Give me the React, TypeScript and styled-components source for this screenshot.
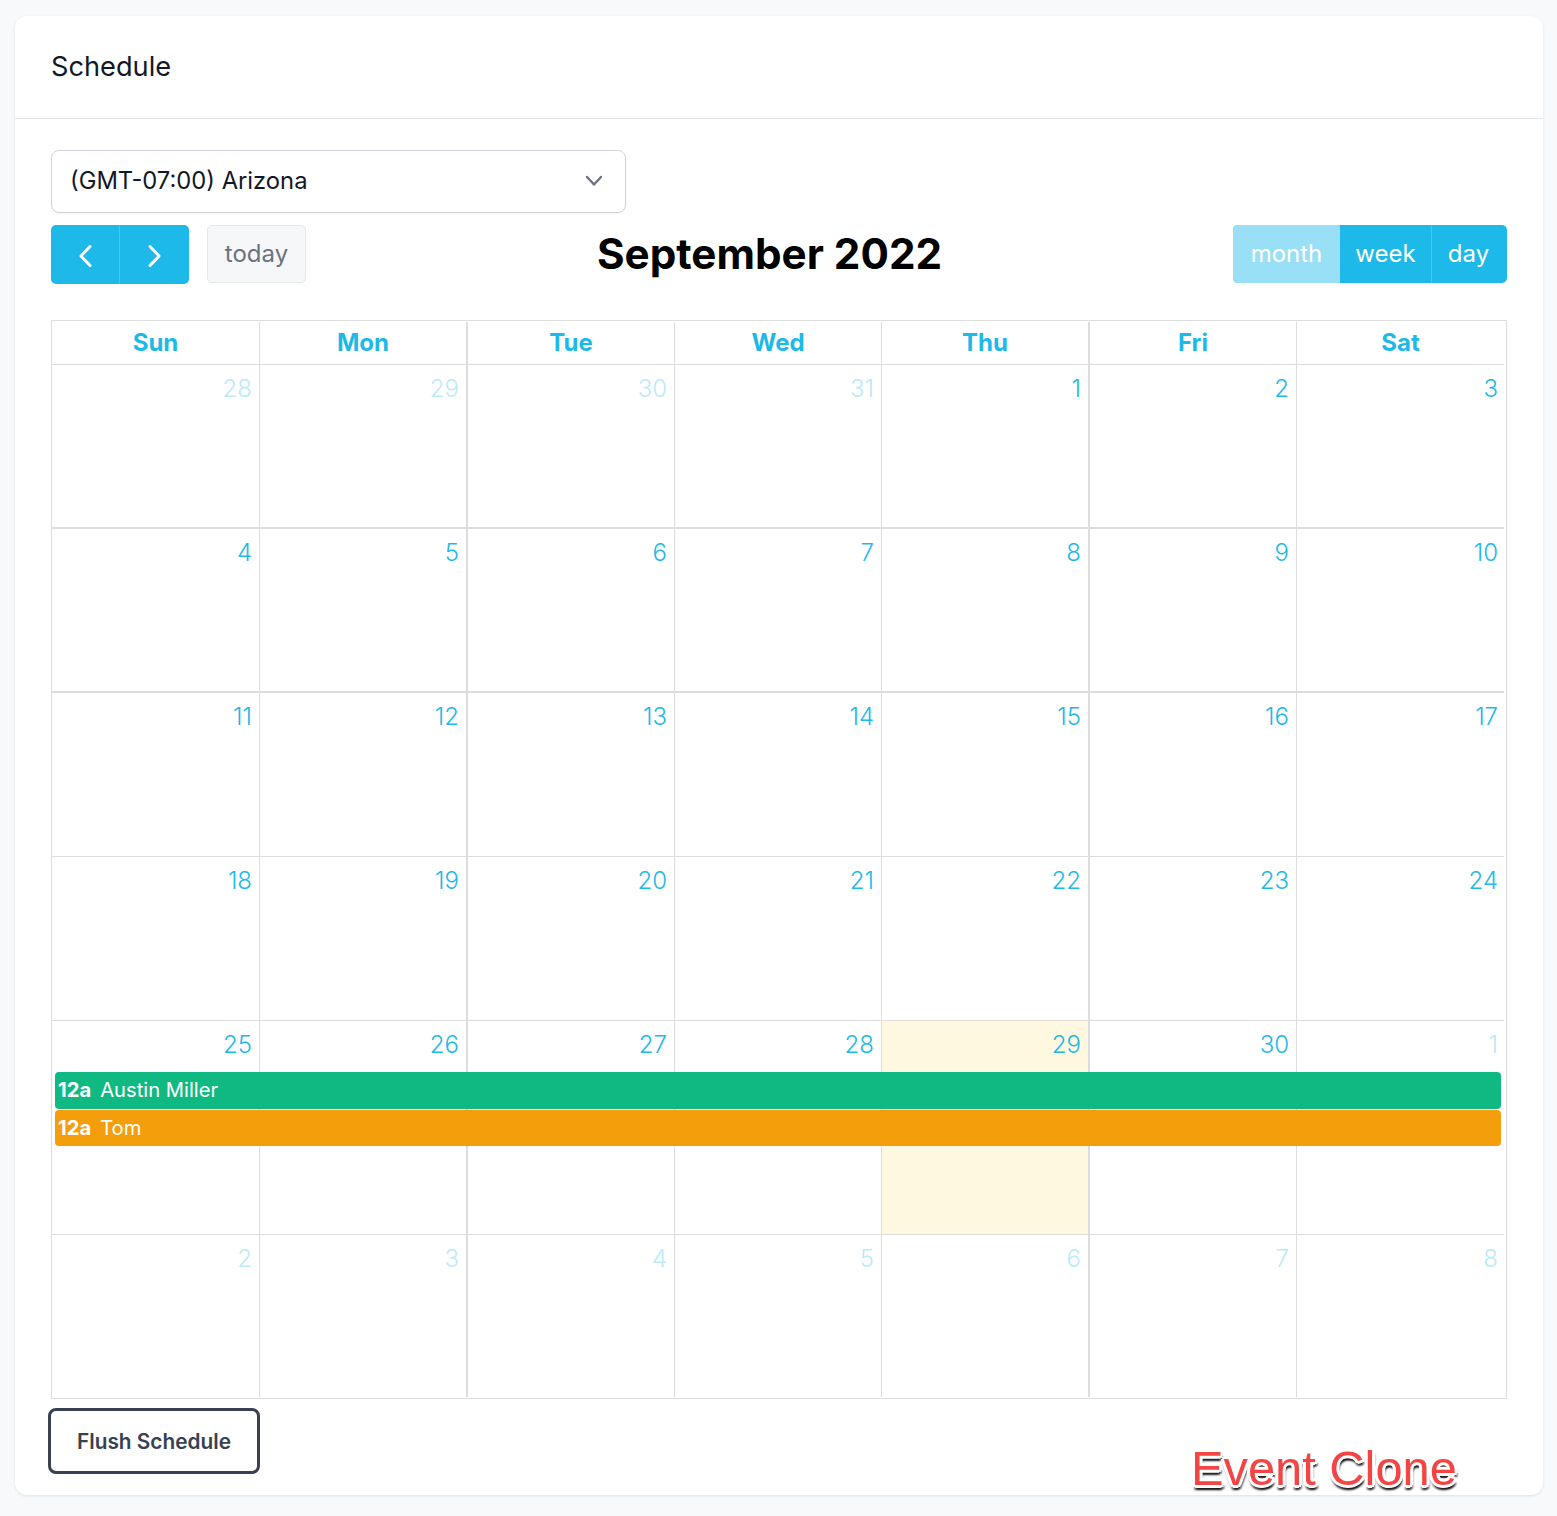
import React from "react";
import styled, { createGlobalStyle } from "styled-components";

const Global = createGlobalStyle`
  html, body { margin: 0; padding: 0; background: #f8f9fb; }
  body { font-family: Inter, "Liberation Sans", sans-serif; width: 1557px; height: 1516px; overflow: hidden; }
  * { box-sizing: border-box; }
`;

const Page = styled.div`
  padding: 16px 14px 0 15px;
`;
const Card = styled.section`
  position: relative;
  height: 1479px;
  background: #fff;
  border-radius: 12px;
  box-shadow: 0 1px 3px rgba(0, 0, 0, 0.1);
`;
const CardHeader = styled.header`
  height: 103px;
  padding: 0 36px 2px;
  display: flex;
  align-items: center;
  border-bottom: 1px solid #e5e7eb;
  font-size: 27.2px;
  color: #111827;
`;
const CardBody = styled.div`
  padding: 31px 36px 0;
`;
const SelectBox = styled.div`
  width: 575px;
  height: 63px;
  display: flex;
  align-items: center;
  justify-content: space-between;
  padding: 0 21px 2px 18px;
  border: 1px solid #d1d5db;
  border-radius: 8px;
  box-shadow: 0 1px 2px rgba(0, 0, 0, 0.05);
  font-size: 23.75px;
  color: #111827;
`;
const Toolbar = styled.div`
  display: flex;
  justify-content: space-between;
  align-items: flex-start;
  margin-top: 12px;
  height: 95px;
`;
const ToolLeft = styled.div`
  display: flex;
  gap: 18px;
`;
const NavGroup = styled.div`
  display: flex;
  height: 59px;
  border-radius: 5px;
  overflow: hidden;
  background: #1db9e9;
`;
const NavButton = styled.button<{ $divider?: boolean }>`
  width: ${(p) => (p.$divider ? 70 : 68)}px;
  border: 0;
  padding: 2px 0 0;
  background: transparent;
  color: #fff;
  display: flex;
  align-items: center;
  justify-content: center;
  border-left: ${(p) => (p.$divider ? "1px solid #45c6ee" : "0")};
`;
const TodayButton = styled.button`
  width: 99px;
  height: 58px;
  padding: 0 0 2px;
  border: 1px solid #e5e7eb;
  border-radius: 5px;
  background: #f6f7f9;
  color: #6b7280;
  font: 400 24px Inter, sans-serif;
`;
const Title = styled.h2`
  margin: 0;
  font-size: 42.2px;
  line-height: 58px;
  font-weight: 700;
  color: #000;
`;
const ViewGroup = styled.div`
  display: flex;
  height: 58px;
  border-radius: 5px;
  overflow: hidden;
  background: #1db9e9;
`;
const ViewButton = styled.button<{ $active?: boolean; $width: number; $divider?: boolean }>`
  width: ${(p) => p.$width}px;
  padding: 0 ${(p) => (p.$divider ? 2 : 0)}px 2px 0;
  border: 0;
  border-left: ${(p) => (p.$divider ? "1px solid #45c6ee" : "0")};
  background: ${(p) => (p.$active ? "#99e0f7" : "transparent")};
  color: #fff;
  font: 400 24px Inter, sans-serif;
`;

const COLS = "207px 207px 208px 207px 207px 208px 208px";
const THICK = [2, 5];

const Calendar = styled.div`
  width: 1456px;
  border: 1px solid #ddd;
`;
const HeadRow = styled.div`
  display: grid;
  grid-template-columns: ${COLS};
  height: 44px;
  margin-right: 2px;
  border-bottom: 1px solid #ddd;
`;
const HeadCell = styled.div<{ $col: number }>`
  display: flex;
  align-items: center;
  justify-content: center;
  margin-top: 1px;
  padding-bottom: 2px;
  border-left: ${(p) => (p.$col === 0 ? 0 : THICK.includes(p.$col) ? 2 : 1)}px solid #ddd;
  color: #1db9e9;
  font-size: 24px;
  font-weight: 700;
`;
const Week = styled.div<{ $h: number; $line: number }>`
  display: grid;
  grid-template-columns: ${COLS};
  grid-template-rows: 51px 38px 37px 1fr;
  height: ${(p) => p.$h}px;
  margin-right: 2px;
  border-bottom: ${(p) => p.$line}px solid #ddd;
`;
const Day = styled.div<{ $col: number; $today?: boolean; $muted?: boolean; $last?: boolean }>`
  grid-column: ${(p) => p.$col + 1};
  grid-row: 1 / -1;
  margin-bottom: ${(p) => (p.$last ? 1 : 0)}px;
  border-left: ${(p) => (p.$col === 0 ? 0 : THICK.includes(p.$col) ? 2 : 1)}px solid #ddd;
  background: ${(p) => (p.$today ? "#fef8e0" : "transparent")};
  padding: 9px ${(p) => (p.$col === 6 ? 6 : 7)}px 0 0;
  text-align: right;
  font-size: 24px;
  font-weight: 350;
  line-height: 30px;
  color: ${(p) => (p.$muted ? "#bbeaf9" : "#1db9e9")};
`;
const EventBar = styled.div<{ $row: number; $color: string }>`
  grid-column: 1 / -1;
  grid-row: ${(p) => p.$row};
  z-index: 1;
  margin: 0 3px 1px 3px;
  display: flex;
  align-items: center;
  gap: 9px;
  padding: 0 0 2px 3px;
  border-radius: 4px;
  background: ${(p) => p.$color};
  color: #fff;
  font-size: 20.2px;
  white-space: nowrap;
`;
const EventTime = styled.b`
  font-weight: 700;
`;
const FlushButton = styled.button`
  display: block;
  margin: 9px 0 0 -3px;
  width: 212px;
  height: 66px;
  border: 3px solid #374151;
  border-radius: 8px;
  background: #fff;
  color: #374151;
  font: 600 20.8px Inter, sans-serif;
`;
const Stamp = styled.div`
  position: absolute;
  left: 1176px;
  top: 1422px;
  font-family: "Liberation Sans", Arial, sans-serif;
  font-size: 48.8px;
  line-height: 60px;
  white-space: nowrap;
  color: #f44444;
  text-shadow:
    3px 0 0 #fff, -3px 0 0 #fff, 0 3px 0 #fff, 0 -3px 0 #fff,
    2px 2px 0 #fff, -2px 2px 0 #fff, 2px -2px 0 #fff, -2px -2px 0 #fff,
    1px 5px 2px rgba(0, 0, 0, 0.7), -1px 5px 2px rgba(0, 0, 0, 0.5), 3px 4px 2px rgba(0, 0, 0, 0.5);
`;

const Chevron = ({ dir }: { dir: "left" | "right" }) => (
  <svg width="14" height="24" viewBox="0 0 14 24" fill="none" stroke="currentColor" strokeWidth="3" strokeLinecap="round" strokeLinejoin="round">
    <path d={dir === "left" ? "M12 2.5 L3 12 L12 21.5" : "M2 2.5 L11 12 L2 21.5"} />
  </svg>
);

const HEADS = ["Sun", "Mon", "Tue", "Wed", "Thu", "Fri", "Sat"];
type D = { n: number; muted?: boolean; today?: boolean };
const range = (a: number, b: number, muted = false): D[] =>
  Array.from({ length: b - a + 1 }, (_, i) => ({ n: a + i, muted }));
const weeks: { h: number; line: number; days: D[]; events?: boolean; last?: boolean }[] = [
  { h: 164, line: 2, days: [...range(28, 31, true), ...range(1, 3)] },
  { h: 164, line: 2, days: range(4, 10) },
  { h: 164, line: 1, days: range(11, 17) },
  { h: 164, line: 1, days: range(18, 24) },
  {
    h: 214,
    line: 1,
    days: [
      ...range(25, 28),
      { n: 29, today: true },
      { n: 30 },
      { n: 1, muted: true },
    ],
    events: true,
  },
  { h: 163, line: 0, days: range(2, 8, true), last: true },
];

export default function App() {
  return (
    <Page>
      <Global />
      <Card>
        <CardHeader>Schedule</CardHeader>
        <CardBody>
          <SelectBox>
            <span>(GMT-07:00) Arizona</span>
            <svg width="20" height="12" viewBox="0 0 20 12" fill="none" stroke="#6b7280" strokeWidth="2.4" strokeLinecap="round" strokeLinejoin="round">
              <path d="M3 2 L10 9.5 L17 2" />
            </svg>
          </SelectBox>
          <Toolbar>
            <ToolLeft>
              <NavGroup>
                <NavButton aria-label="prev"><Chevron dir="left" /></NavButton>
                <NavButton aria-label="next" $divider><Chevron dir="right" /></NavButton>
              </NavGroup>
              <TodayButton>today</TodayButton>
            </ToolLeft>
            <Title>September 2022</Title>
            <ViewGroup>
              <ViewButton $active $width={107}>month</ViewButton>
              <ViewButton $width={91}>week</ViewButton>
              <ViewButton $width={76} $divider>day</ViewButton>
            </ViewGroup>
          </Toolbar>
          <Calendar>
            <HeadRow>
              {HEADS.map((h, i) => (
                <HeadCell key={h} $col={i}>{h}</HeadCell>
              ))}
            </HeadRow>
            {weeks.map((w, wi) => (
              <Week key={wi} $h={w.h} $line={w.line}>
                {w.days.map((d, i) => (
                  <Day key={i} $col={i} $muted={d.muted} $today={d.today} $last={w.last}>{d.n}</Day>
                ))}
                {w.events && (
                  <>
                    <EventBar $row={2} $color="#10b981"><EventTime>12a</EventTime><span>Austin Miller</span></EventBar>
                    <EventBar $row={3} $color="#f59e0b"><EventTime>12a</EventTime><span>Tom</span></EventBar>
                  </>
                )}
              </Week>
            ))}
          </Calendar>
          <FlushButton>Flush Schedule</FlushButton>
        </CardBody>
        <Stamp>Event Clone</Stamp>
      </Card>
    </Page>
  );
}
